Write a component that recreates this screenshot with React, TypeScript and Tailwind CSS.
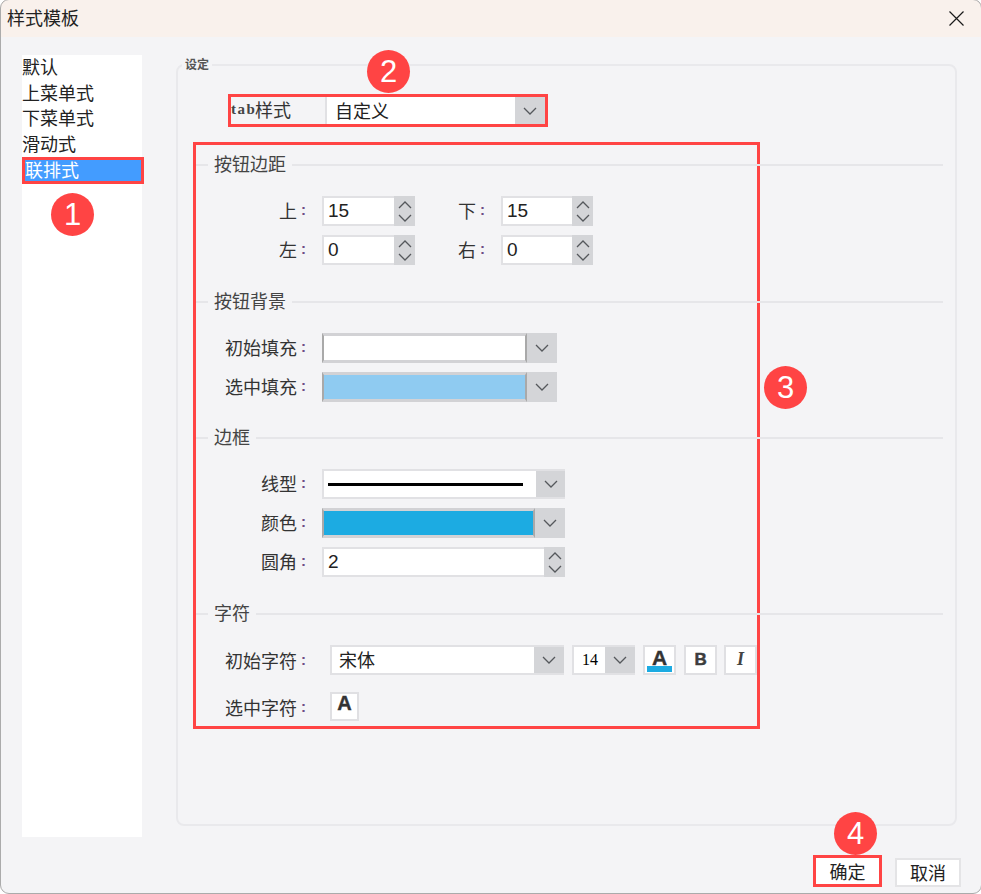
import React from 'react';

const CJK = '[font-family:"Noto_Sans_CJK_SC","Liberation_Sans",sans-serif]';

const Chevron = ({ up = false, className = '' }: { up?: boolean; className?: string }) => (
  <svg viewBox="0 0 14 8" className={`w-[14px] h-[8px] ${className}`} fill="none" stroke="#55585c" strokeWidth="1.3">
    <polyline points={up ? '1,7 7,1 13,7' : '1,1 7,7 13,1'} />
  </svg>
);

const Badge = ({ n, className }: { n: number; className: string }) => (
  <div className={`absolute w-[43px] h-[43px] rounded-full bg-[#ff4444] text-white flex items-center justify-center text-[31px] leading-none [font-family:"Liberation_Sans",sans-serif] ${className}`}>
    {n}
  </div>
);

const Heading = ({ title }: { title: string }) => (
  <div className="flex items-center w-[747px] h-[24px]">
    <div className="w-[12px] h-[2px] bg-[#e6e6e9]"></div>
    <span className="ml-[6px] mr-[6px] pb-[4px] text-[18px] leading-[20px] text-[#444444]">{title}</span>
    <div className="flex-1 h-[2px] bg-[#e6e6e9]"></div>
  </div>
);

const Label = ({ text, width = 110, className = 'pb-[3px]' }: { text: string; width?: number; className?: string }) => (
  <div className={`flex items-center justify-end shrink-0 text-[18px] leading-[24px] text-[#333333] ${className}`} style={{ width }}>
    {text}
    <span className="ml-[4px] w-[5px] text-[15px] font-bold text-[#6d4c86] [font-family:'Liberation_Sans',sans-serif]">:</span>
  </div>
);

// number box with up/down arrows
const Spin = ({ value, width }: { value: string; width: number }) => (
  <div className="flex h-[30px] bg-[#d4d5d8] border-2 border-r-0 border-[#e1e1e4]" style={{ width }}>
    <div className="flex-1 bg-white pl-[4px] text-[19px] leading-[26px] text-[#222222] [font-family:'Liberation_Sans',sans-serif]">{value}</div>
    <div className="w-[21px] flex flex-col items-center justify-center gap-[5px] bg-[#d4d5d8] -mt-[2px] -mb-[2px]">
      <Chevron up />
      <Chevron />
    </div>
  </div>
);

const ArrowBox = ({ w }: { w: number }) => (
  <div className="flex items-center justify-center bg-[#d4d5d8] shrink-0" style={{ width: w }}>
    <Chevron />
  </div>
);

const Swatch = ({ color, width, arrow }: { color: string; width: number; arrow: number }) => (
  <div className="flex h-[30px]" style={{ width }}>
    <div className={`flex-1 border-y-[3px] border-l-2 border-r-2 border-y-[#d2d2d5] border-x-[#a9a9a9] ${color}`}></div>
    <ArrowBox w={arrow} />
  </div>
);

const IconBtn = ({ children, className = '' }: { children: React.ReactNode; className?: string }) => (
  <div className={`relative w-[33px] h-[30px] bg-white border-2 border-[#e0e0e3] flex justify-center overflow-hidden ${className}`}>
    {children}
  </div>
);

const App: React.FC = () => {
  return (
    <div className={`relative w-[981px] h-[894px] bg-[#f4f4f6] flex flex-col overflow-hidden ${CJK}`}>
      {/* Title bar */}
      <div className="h-[37px] bg-[#f9f1ec] flex items-center justify-between pl-[7px] pr-[17px] shrink-0">
        <span className="pb-[3px] text-[18px] leading-[24px] text-[#222222]">样式模板</span>
        <svg viewBox="0 0 15 15" className="w-[15px] h-[15px]" fill="none" stroke="#1a1a1a" strokeWidth="1.2">
          <path d="M0.5 0.5 L14.5 14.5 M14.5 0.5 L0.5 14.5" />
        </svg>
      </div>

      <div className="flex h-[800px] shrink-0">
        {/* Template list */}
        <div className="mt-[18px] ml-[22px] w-[120px] h-[782px] bg-white text-[18px] leading-[22px] text-[#222222] shrink-0">
          <div className="h-[25.6px]">默认</div>
          <div className="h-[25.6px]">上菜单式</div>
          <div className="h-[25.6px]">下菜单式</div>
          <div className="h-[25.6px]">滑动式</div>
          <div className="w-[122px] h-[27px] border-[3px] border-[#ff4444] bg-[#439cff] leading-[19px] text-white">联排式</div>
        </div>

        {/* Settings group */}
        <div className="relative mt-[27px] ml-[34px] w-[781px] h-[762px] border-2 border-[#e9e9ec] rounded-[8px]">
          <div className="absolute -top-[10px] left-[4px] px-[3px] bg-[#f4f4f6] text-[12px] leading-[16px] font-bold text-[#555555]">设定</div>

          {/* Tab style */}
          <div className="mt-[28px] ml-[50px] w-[320px] h-[33px] border-[3px] border-[#ff4444] flex">
            <div className="w-[94px] flex items-center pb-[2px] text-[18px] text-[#333333] shrink-0">
              <span className="w-[24px] text-[15px] tracking-[1.5px] font-bold text-[#444444] [font-family:'Liberation_Serif',serif]">tab</span>样式
            </div>
            <div className="flex-1 flex border-l-2 border-[#e1e1e4]">
              <div className="flex-1 bg-white pl-[8px] text-[18px] leading-[26px] text-[#222222]">自定义</div>
              <ArrowBox w={30} />
            </div>
          </div>

          {/* Option panel */}
          <div className="mt-[15px] ml-[15px] w-[567px] h-[587px] border-[3px] border-[#ff4444] pt-[8px]">
            <Heading title="按钮边距" />
            <div className="mt-[19px] flex flex-col gap-[9px]">
              <div className="flex">
                <Label text="上" />
                <div className="ml-[16px]"><Spin value="15" width={93} /></div>
                <Label text="下" width={70} />
                <div className="ml-[16px]"><Spin value="15" width={92} /></div>
              </div>
              <div className="flex">
                <Label text="左" />
                <div className="ml-[16px]"><Spin value="0" width={93} /></div>
                <Label text="右" width={70} />
                <div className="ml-[16px]"><Spin value="0" width={92} /></div>
              </div>
            </div>

            <div className="mt-[25px]"><Heading title="按钮背景" /></div>
            <div className="mt-[19px] flex flex-col gap-[9px]">
              <div className="flex">
                <Label text="初始填充" />
                <div className="ml-[16px]"><Swatch color="bg-white" width={235} arrow={30} /></div>
              </div>
              <div className="flex">
                <Label text="选中填充" />
                <div className="ml-[16px]"><Swatch color="bg-[#8fcbf1]" width={235} arrow={30} /></div>
              </div>
            </div>

            <div className="mt-[24px]"><Heading title="边框" /></div>
            <div className="mt-[19px] flex flex-col gap-[9px]">
              <div className="flex">
                <Label text="线型" />
                <div className="ml-[16px] flex h-[30px] w-[243px] border-2 border-r-0 border-[#e1e1e4] bg-[#d4d5d8]">
                  <div className="flex-1 bg-white flex items-center px-[4px]">
                    <div className="w-[195px] h-[3px] bg-black"></div>
                  </div>
                  <div className="w-[29px] flex items-center justify-center"><Chevron /></div>
                </div>
              </div>
              <div className="flex">
                <Label text="颜色" />
                <div className="ml-[16px]"><Swatch color="bg-[#1cabe2]" width={243} arrow={30} /></div>
              </div>
              <div className="flex">
                <Label text="圆角" />
                <div className="ml-[16px]"><Spin value="2" width={243} /></div>
              </div>
            </div>

            <div className="mt-[25px]"><Heading title="字符" /></div>
            <div className="mt-[19px] flex">
              <Label text="初始字符" className="pb-[1px]" />
              <div className="ml-[24px] flex h-[30px] w-[235px] border-2 border-r-0 border-[#e1e1e4] bg-[#d4d5d8]">
                <div className="flex-1 bg-white pl-[7px] text-[18px] leading-[24px] text-[#222222]">宋体</div>
                <div className="w-[30px] flex items-center justify-center"><Chevron /></div>
              </div>
              <div className="ml-[8px] flex h-[30px] w-[63px] border-2 border-r-0 border-[#e1e1e4] bg-[#d4d5d8]">
                <div className="w-[31px] bg-white text-center text-[16px] leading-[26px] text-black [font-family:'Liberation_Serif',serif]">14</div>
                <div className="flex-1 flex items-center justify-center"><Chevron /></div>
              </div>
              <IconBtn className="ml-[8px]">
                <span className="text-[21px] leading-[21px] font-bold text-[#333333] [-webkit-text-stroke:0.4px_#333333] [font-family:'Liberation_Sans',sans-serif]">A</span>
                <div className="absolute left-[2px] right-[2px] bottom-[1px] h-[6px] bg-[#1cabe2]"></div>
              </IconBtn>
              <IconBtn className="ml-[8px]">
                <span className="text-[17px] leading-[25px] font-bold text-[#3d3d3d] [-webkit-text-stroke:0.5px_#3d3d3d] [font-family:'Liberation_Sans',sans-serif]">B</span>
              </IconBtn>
              <IconBtn className="ml-[7px]">
                <span className="text-[18px] leading-[25px] font-bold italic text-[#444444] [font-family:'Liberation_Serif',serif]">I</span>
              </IconBtn>
            </div>
            <div className="mt-[17px] flex">
              <Label text="选中字符" className="pt-[1px]" />
              <div className="ml-[24px] w-[29px] h-[29px] bg-white border-2 border-[#e0e0e3] flex justify-center">
                <span className="text-[20px] leading-[18px] font-bold text-[#333333] [-webkit-text-stroke:0.4px_#333333] [font-family:'Liberation_Sans',sans-serif]">A</span>
              </div>
            </div>
          </div>
        </div>
      </div>

      {/* Footer buttons */}
      <div className="mt-[18px] pr-[20px] h-[32px] flex justify-end items-end gap-[13px] text-[18px] text-[#222222] shrink-0">
        <div className="w-[69px] h-[32px] border-[3px] border-[#ff4444] bg-white flex items-center justify-center leading-[24px]">确定</div>
        <div className="w-[66px] h-[29px] border-2 border-[#e4e4e6] bg-white flex items-center justify-center pb-[1px] leading-[24px]">取消</div>
      </div>

      {/* Number callouts */}
      <Badge n={1} className="left-[51px] top-[193px]" />
      <Badge n={2} className="left-[367px] top-[50px]" />
      <Badge n={3} className="left-[764px] top-[366px]" />
      <Badge n={4} className="left-[834px] top-[812px]" />

      {/* Window edge: top and right lines sit just off the page */}
      <div className="absolute left-0 bottom-0 -top-[1px] -right-[1px] rounded-[9px] border border-[#ababab] pointer-events-none shadow-[0_0_0_8px_#ffffff]"></div>
    </div>
  );
};

export default App;
